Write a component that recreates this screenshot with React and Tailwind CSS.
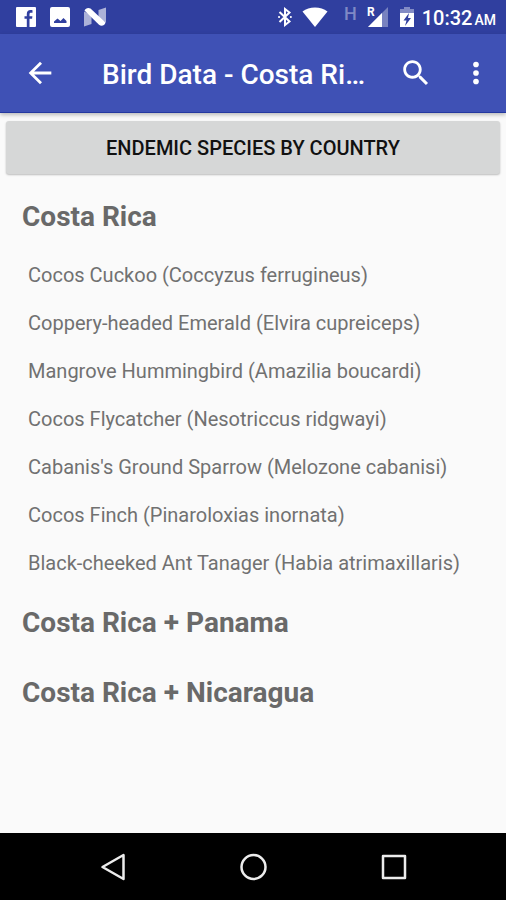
import { useState } from 'react';

const regions = [
	{
		name: 'Costa Rica',
		species: [
			'Cocos Cuckoo (Coccyzus ferrugineus)',
			'Coppery-headed Emerald (Elvira cupreiceps)',
			'Mangrove Hummingbird (Amazilia boucardi)',
			'Cocos Flycatcher (Nesotriccus ridgwayi)',
			"Cabanis's Ground Sparrow (Melozone cabanisi)",
			'Cocos Finch (Pinaroloxias inornata)',
			'Black-cheeked Ant Tanager (Habia atrimaxillaris)',
		],
	},
	{ name: 'Costa Rica + Panama', species: [] },
	{ name: 'Costa Rica + Nicaragua', species: [] },
];

const StatusBar = () => (
	<div className="flex h-[34px] items-center justify-between bg-[#303f9f] pl-4 pr-2.5 text-white">
		<div className="flex items-center gap-3.5">
			<svg className="h-5 w-5" viewBox="0 0 20 20" fill="currentColor" aria-hidden="true">
				<path d="M1 0h18a1 1 0 0 1 1 1v18a1 1 0 0 1-1 1h-5.500v-8.300h2.600l.3-2.500h-2.900V7.200c0-1 .4-1.500 1.500-1.500h1.500V3.300c-.4-.1-1.100-.2-2-.2-2.300 0-3.700 1.400-3.700 3.800v2.300H8.500v2.500h2.300V20H1a1 1 0 0 1-1-1V1a1 1 0 0 1 1-1z" />
			</svg>
			<svg className="h-5 w-5" viewBox="0 0 20 20" fill="currentColor" aria-hidden="true">
				<path
					fillRule="evenodd"
					d="M2 0h16a2 2 0 0 1 2 2v16a2 2 0 0 1-2 2H2a2 2 0 0 1-2-2V2a2 2 0 0 1 2-2zM4 16h12.500v-2L13.500 11l-3 3L7.500 11.500 4 14.500z"
				/>
			</svg>
			<svg className="h-5 w-[22px]" viewBox="0 0 22 20" fill="currentColor" aria-hidden="true">
				<path opacity=".6" d="M0 4.500L7.500 8v9L0 19.500zM14.500 3L22 .5v15L14.500 12z" />
				<path d="M.5 3.500C1.500.8 4.500.3 6.500 1.500L21.500 15.500c-1 3.500-4.500 4-6.500 2.200z" />
			</svg>
		</div>
		<div className="flex items-center">
			<svg className="h-5 w-3.5" viewBox="0 0 14 20" fill="none" stroke="currentColor" strokeWidth="2" aria-hidden="true">
				<path d="M1.500 5l10 9.500L7 18V2l4.500 3.500-10 9.500" />
				<path d="M1 10h.1M12.800 10h.1" strokeLinecap="round" />
			</svg>
			<svg className="ml-2.5 h-5 w-[26px]" viewBox="0 0 26 20" fill="currentColor" aria-hidden="true">
				<path d="M13 20L.5 4.500C4 1.800 8.200.5 13 .5s9 1.300 12.500 4z" />
			</svg>
			<span className="ml-4 self-start text-lg font-medium leading-6 text-[#7f89c5]">H</span>
			<svg className="ml-2.5 h-[22px] w-[21px]" viewBox="0 0 21 22" fill="currentColor" aria-hidden="true">
				<path opacity=".35" d="M21 1v20H1z" />
				<path d="M15 7v14H1z" />
				<text x="0" y="10" fontSize="12" fontWeight="700">R</text>
			</svg>
			<svg className="ml-3 h-5 w-3.5" viewBox="0 0 14 20" fill="currentColor" aria-hidden="true">
				<path opacity=".4" d="M4 0h6v2h4v4H0V2h4z" />
				<path fillRule="evenodd" d="M0 6h14v14H0zM9 6L3.500 13.500h3L5 19l6-8H8z" />
			</svg>
			<div className="ml-2 flex items-baseline gap-0.5 pt-0.5 font-medium leading-6">
				<span className="text-xl">10:32</span>
				<span className="text-sm">AM</span>
			</div>
		</div>
	</div>
);

const AppBar = () => (
	<header className="relative flex h-[79px] items-center border-b border-[#2438a0] bg-[#3f51b5] text-white shadow-[0_2px_4px_rgba(0,0,0,0.25)]">
		<button aria-label="Back" className="flex h-16 w-20 items-center justify-center">
			<svg className="h-[34px] w-[34px]" viewBox="0 0 24 24" fill="currentColor">
				<path d="M20 11H7.830l5.590-5.590L12 4l-8 8 8 8 1.410-1.410L7.830 13H20v-2z" />
			</svg>
		</button>
		<h1 className="ml-[22px] flex-1 truncate pt-1 text-[28px] font-medium leading-9">Bird Data - Costa Ri…</h1>
		<button aria-label="Search" className="flex h-16 w-[60px] items-center justify-center">
			<svg className="h-[34px] w-[34px]" viewBox="0 0 24 24" fill="currentColor">
				<path d="M15.500 14h-.79l-.28-.27C15.410 12.590 16 11.110 16 9.500 16 5.910 13.090 3 9.500 3S3 5.910 3 9.500 5.910 16 9.500 16c1.610 0 3.090-.59 4.230-1.570l.27.28v.79l5 4.990L20.490 19l-4.990-5zm-6 0C7.010 14 5 11.990 5 9.500S7.010 5 9.500 5 14 7.010 14 9.500 11.990 14 9.500 14z" />
			</svg>
		</button>
		<button aria-label="More options" className="flex h-16 w-[60px] items-center justify-center">
			<svg className="h-[34px] w-[34px]" viewBox="0 0 24 24" fill="currentColor">
				<circle cx="12" cy="6" r="2" />
				<circle cx="12" cy="12" r="2" />
				<circle cx="12" cy="18" r="2" />
			</svg>
		</button>
	</header>
);

const Region = ({ region }) => {
	const [open, setOpen] = useState(true);

	return (
		<section>
			<h2>
				<button
					onClick={() => setOpen(!open)}
					className="flex h-[70px] w-full items-center px-[22px] text-left text-[28px] font-bold text-[#696969]">
					{region.name}
				</button>
			</h2>
			{open && region.species.length > 0 && (
				<ul>
					{region.species.map((bird) => (
						<li key={bird} className="flex h-12 items-center px-7 pb-0.5 text-xl text-[#717171]">
							{bird}
						</li>
					))}
				</ul>
			)}
		</section>
	);
};

const NavBar = () => (
	<nav className="flex h-[67px] items-center justify-center gap-[73px] bg-black text-[#ececec]">
		<button aria-label="Back" className="flex h-12 w-[67px] items-center justify-center">
			<svg className="h-8 w-8" viewBox="0 0 32 32" fill="none" stroke="currentColor" strokeWidth="2.500" strokeLinejoin="round">
				<path d="M26.500 4v24L5.500 16z" />
			</svg>
		</button>
		<button aria-label="Home" className="flex h-12 w-[67px] items-center justify-center">
			<svg className="h-8 w-8" viewBox="0 0 32 32" fill="none" stroke="currentColor" strokeWidth="2.500">
				<circle cx="16.500" cy="16" r="12" />
			</svg>
		</button>
		<button aria-label="Overview" className="flex h-12 w-[67px] items-center justify-center">
			<svg className="h-8 w-8" viewBox="0 0 32 32" fill="none" stroke="currentColor" strokeWidth="2.500" strokeLinejoin="round">
				<path d="M6 5h22v22H6z" />
			</svg>
		</button>
	</nav>
);

const App = () => {
	return (
		<div className="flex min-h-screen flex-col bg-[#fafafa] font-['Roboto',sans-serif]">
			<StatusBar />
			<AppBar />
			<main className="flex-1">
				<div className="px-1.5 pb-2 pt-2">
					<button className="h-[53px] w-full rounded-[3px] bg-[#d6d7d7] text-xl font-medium text-[#111111] shadow-[0_1px_2px_rgba(0,0,0,0.25)]">
						ENDEMIC SPECIES BY COUNTRY
					</button>
				</div>
				{regions.map((region) => (
					<Region key={region.name} region={region} />
				))}
			</main>
			<NavBar />
		</div>
	);
};

export default App;
